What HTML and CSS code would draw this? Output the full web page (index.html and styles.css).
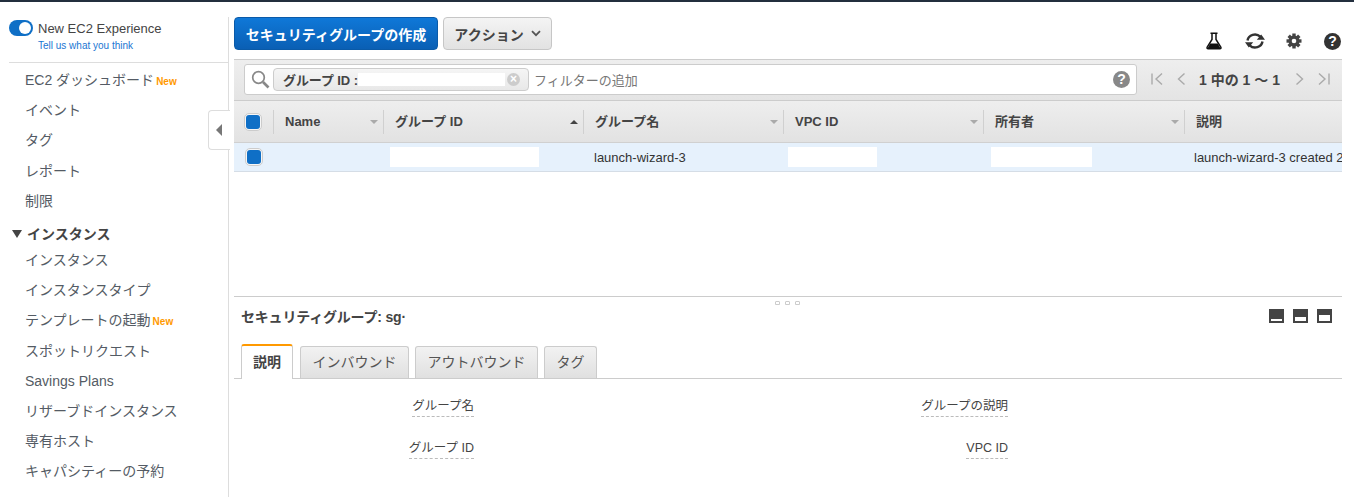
FILE: index.html
```html
<!DOCTYPE html>
<html lang="ja">
<head>
<meta charset="utf-8">
<title>セキュリティグループ</title>
<link rel="stylesheet" href="styles.css">
</head>
<body>
<div class="topline"></div>
<div class="app">
  <aside class="side">
    <div class="exp">
      <div class="exp-row"><span class="switch"><span class="knob"></span></span><span class="exp-title">New EC2 Experience</span></div>
      <a class="exp-link">Tell us what you think</a>
    </div>
    <nav class="nav">
      <div class="nav-item">EC2 ダッシュボード<span class="new">New</span></div>
      <div class="nav-item">イベント</div>
      <div class="nav-item">タグ</div>
      <div class="nav-item">レポート</div>
      <div class="nav-item">制限</div>
      <div class="nav-head"><span class="tri"></span>インスタンス</div>
      <div class="nav-item">インスタンス</div>
      <div class="nav-item">インスタンスタイプ</div>
      <div class="nav-item">テンプレートの起動<span class="new">New</span></div>
      <div class="nav-item">スポットリクエスト</div>
      <div class="nav-item">Savings Plans</div>
      <div class="nav-item">リザーブドインスタンス</div>
      <div class="nav-item">専有ホスト</div>
      <div class="nav-item">キャパシティーの予約</div>
    </nav>
    <div class="collapse"><span class="collapse-tri"></span></div>
  </aside>
  <main class="main">
    <div class="toolbar">
      <button class="btn primary">セキュリティグループの作成</button>
      <button class="btn action">アクション<svg class="chev" width="10" height="7" viewBox="0 0 10 7"><path d="M1 1.2l4 4 4-4" fill="none" stroke="#555" stroke-width="1.8"/></svg></button>
      <div class="tools">
        <svg width="18" height="18" viewBox="0 0 18 18"><path d="M5.500 1.200h7M7 2v5.500L2.200 15.200c-.5.900 0 1.600.9 1.600h11.800c.9 0 1.400-.7.9-1.600L11 7.500V2" fill="none" stroke="#111" stroke-width="1.500"/><path d="M5.200 11.500h7.600l2.500 4.600H2.700z" fill="#111"/></svg>
        <svg width="20" height="18" viewBox="0 0 20 18"><path d="M2.500 8.500a7.500 7 0 0 1 12.800-3.800M17.500 9.500a7.500 7 0 0 1-12.800 3.800" fill="none" stroke="#333" stroke-width="2.400"/><path d="M11.800 7.800h8.200l-3.800-5.200zM8.200 10.200H0l3.800 5.200z" fill="#333"/></svg>
        <svg width="16" height="16" viewBox="0 0 16 16"><g fill="#444"><circle cx="8" cy="8" r="5.500"/><rect x="6.300" y="0.500" width="3.400" height="15"/><rect x="0.500" y="6.300" width="15" height="3.400"/><rect x="6.300" y="0.500" width="3.400" height="15" transform="rotate(45 8 8)"/><rect x="6.300" y="0.500" width="3.400" height="15" transform="rotate(-45 8 8)"/></g><circle cx="8" cy="8" r="2.300" fill="#fff"/></svg>
        <span class="help dark">?</span>
      </div>
    </div>
    <div class="filter-bar">
      <div class="search">
        <svg class="lens" width="19" height="19" viewBox="0 0 19 19"><circle cx="7.500" cy="7.500" r="5.800" fill="none" stroke="#888" stroke-width="1.700"/><path d="M12 12l5.500 5.500" stroke="#888" stroke-width="2.600"/></svg>
        <div class="token"><b class="token-label">グループ ID :</b><span class="token-mask"></span><span class="token-x">×</span></div>
        <span class="placeholder">フィルターの追加</span>
        <span class="help grey">?</span>
      </div>
      <div class="pager">
        <svg width="14" height="14" viewBox="0 0 14 14"><path d="M2 1.500v11M12 1.500L6 7l6 5.500" fill="none" stroke="#aaa" stroke-width="1.400"/></svg>
        <svg width="10" height="14" viewBox="0 0 10 14"><path d="M8.500 1.500L2.500 7l6 5.500" fill="none" stroke="#aaa" stroke-width="1.400"/></svg>
        <span class="pager-text">1 中の 1 〜 1</span>
        <svg width="10" height="14" viewBox="0 0 10 14"><path d="M1.500 1.500L7.500 7l-6 5.500" fill="none" stroke="#aaa" stroke-width="1.400"/></svg>
        <svg width="14" height="14" viewBox="0 0 14 14"><path d="M12 1.500v11M2 1.500L8 7l-6 5.500" fill="none" stroke="#aaa" stroke-width="1.400"/></svg>
      </div>
    </div>
    <div class="grid head-row">
      <div class="cell check-cell"><span class="check"></span></div>
      <div class="cell th">Name<span class="sort"></span></div>
      <div class="cell th">グループ ID<span class="sort up"></span></div>
      <div class="cell th">グループ名<span class="sort"></span></div>
      <div class="cell th">VPC ID<span class="sort"></span></div>
      <div class="cell th">所有者<span class="sort"></span></div>
      <div class="cell th">説明</div>
    </div>
    <div class="grid body-row">
      <div class="cell check-cell"><span class="check small"></span></div>
      <div class="cell"></div>
      <div class="cell"><span class="mask m1"></span></div>
      <div class="cell td">launch-wizard-3</div>
      <div class="cell"><span class="mask m2"></span></div>
      <div class="cell"><span class="mask m3"></span></div>
      <div class="cell td clip">launch-wizard-3 created 2</div>
    </div>
    <div class="spacer"></div>
    <div class="split"><span class="grip"></span><span class="grip"></span><span class="grip"></span></div>
    <div class="detail-head">
      <h2 class="detail-title">セキュリティグループ: sg·</h2>
      <div class="panes">
        <span class="pane"><span class="pane-in p1"></span></span>
        <span class="pane"><span class="pane-in p2"></span></span>
        <span class="pane"><span class="pane-in p3"></span></span>
      </div>
    </div>
    <div class="tabs">
      <div class="tab active">説明</div>
      <div class="tab">インバウンド</div>
      <div class="tab">アウトバウンド</div>
      <div class="tab">タグ</div>
    </div>
    <div class="props">
      <div class="prop-l"><span class="prop">グループ名</span></div>
      <div class="prop-r"><span class="prop">グループの説明</span></div>
      <div class="prop-l"><span class="prop">グループ ID</span></div>
      <div class="prop-r"><span class="prop">VPC ID</span></div>
    </div>
  </main>
</div>
</body>
</html>
```
FILE: styles.css
```css
* { box-sizing: border-box; }
html, body { margin: 0; padding: 0; height: 497px; overflow: hidden; background: #fff; }
body { font-family: "Liberation Sans", "Noto Sans CJK JP", sans-serif; color: #444; font-size: 13px; }
.topline { height: 2px; background: #232f3e; }
.app { display: flex; height: 495px; }

.side { position: relative; width: 229px; flex: none; border-right: 1px solid #ddd; margin-top: 15px; height: 480px; }
.exp { margin-left: 9px; height: 43px; border-bottom: 1px solid #ddd; }
.exp-row { display: flex; align-items: center; height: 16px; margin-top: 3px; }
.switch { width: 24px; height: 16px; border-radius: 8px; background: #0f6fc6; position: relative; flex: none; }
.knob { position: absolute; right: 2px; top: 2px; width: 12px; height: 12px; border-radius: 50%; background: #fff; }
.exp-title { margin-left: 5px; font-size: 13px; color: #444; }
.exp-link { display: block; margin: 4px 0 0 29px; font-size: 10px; line-height: 12px; color: #1a76d2; }
.nav { padding-top: 2px; }
.nav-item { height: 30.200px; line-height: 30px; padding-left: 25px; font-size: 14px; color: #545b64; white-space: nowrap; }
.nav-head { height: 22px; line-height: 22px; margin-top: 7px; padding-left: 12px; font-size: 14px; font-weight: 700; color: #444; display: flex; align-items: center; }
.tri { width: 0; height: 0; border-left: 5px solid transparent; border-right: 5px solid transparent; border-top: 8px solid #444; margin-right: 5px; }
.new { margin-left: 2px; font-size: 10px; font-weight: 700; color: #ff9900; }
.collapse { position: absolute; left: 208px; top: 93px; width: 22px; height: 40px; background: #fff; border: 1px solid #ddd; border-right: 0; border-radius: 4px 0 0 4px; display: flex; align-items: center; justify-content: center; }
.collapse-tri { width: 0; height: 0; border-top: 6px solid transparent; border-bottom: 6px solid transparent; border-right: 6px solid #777; margin-right: 2px; }

.main { width: 1108px; margin-left: 5px; flex: none; display: flex; flex-direction: column; }
.toolbar { display: flex; align-items: flex-start; padding-top: 15px; height: 57px; position: relative; }
.btn { height: 33px; border-radius: 4px; font: 700 14px "Liberation Sans", "Noto Sans CJK JP", sans-serif; padding: 0; }
.primary { width: 204px; color: #fff; background: linear-gradient(#0f78d8, #0a5fb4); border: 1px solid #0a5aa8; }
.action { width: 109px; margin-left: 5px; color: #444; background: linear-gradient(#f4f4f4, #e2e2e2); border: 1px solid #c6c6c6; display: flex; align-items: center; justify-content: center; gap: 7px; }
.tools { position: absolute; left: 971px; top: 29px; display: flex; align-items: center; justify-content: space-between; height: 20px; width: 136px; }
.help { display: inline-flex; align-items: center; justify-content: center; width: 17px; height: 17px; border-radius: 50%; color: #fff; font-size: 14px; font-weight: 700; line-height: 17px; flex: none; }
.help.dark { background: #333; }
.help.grey { background: #888; }

.filter-bar { height: 42px; background: linear-gradient(#eee, #e4e4e4); border-top: 1px solid #ccc; border-bottom: 1px solid #ccc; display: flex; align-items: center; padding: 0 0 2px 10px; flex: none; }
.search { width: 893px; height: 31px; background: #fff; border: 1px solid #ccc; border-radius: 3px; display: flex; align-items: center; padding-left: 6px; position: relative; }
.lens { flex: none; }
.token { margin-left: 3px; width: 256px; height: 23px; border: 1px solid #ccc; border-radius: 4px; background: linear-gradient(#f5f5f5, #e8e8e8); display: flex; align-items: center; padding-left: 9px; font-size: 13px; color: #444; position: relative; }
.token-label { letter-spacing: -0.1px; }
.token-mask { position: absolute; left: 84px; top: 4px; width: 147px; height: 13px; background: #fff; }
.token-x { position: absolute; right: 8px; top: 4px; width: 13px; height: 13px; border-radius: 50%; background: #ccc; color: #fff; font-size: 12px; font-weight: 700; line-height: 13px; text-align: center; }
.placeholder { margin-left: 5px; color: #777; font-size: 13px; }
.search .help { position: absolute; right: 6px; top: 6px; }
.pager { display: flex; align-items: center; margin-left: 13px; font-size: 14px; font-weight: 700; color: #444; gap: 12px; }
.pager-text { margin: 0 2px 0 1px; width: 82px; font-size: 14px; white-space: nowrap; }

.grid { display: grid; grid-template-columns: 39px 110px 200px 200px 200px 201px 158px; flex: none; }
.head-row { height: 42px; background: linear-gradient(#eee, #e2e2e2); border-bottom: 1px solid #d0d0d0; align-items: center; }
.body-row { height: 29px; background: #e6f1fc; border-bottom: 1px solid #d5dde6; align-items: center; }
.cell { position: relative; white-space: nowrap; overflow: hidden; }
.check-cell { padding-left: 10px; display: flex; align-items: center; }
.check { width: 18px; height: 18px; border-radius: 5px; background: #f6f6f6; border: 1px solid #ccc; display: flex; align-items: center; justify-content: center; }
.check::before { content: ""; width: 14px; height: 14px; border-radius: 3px; background: #0f6fc6; }
.check.small { margin-left: 1px; }
.th { height: 24px; line-height: 24px; padding-left: 11px; font-weight: 700; font-size: 13px; color: #444; border-left: 1px solid #d0d0d0; }
.sort { position: absolute; right: 5px; top: 10px; width: 0; height: 0; border-left: 4px solid transparent; border-right: 4px solid transparent; border-top: 4px solid #aaa; }
.sort.up { border-top: 0; border-bottom: 4px solid #444; }
.td { font-size: 13px; color: #333; padding-left: 11px; }
.clip { overflow: hidden; padding-left: 10px; }
.mask { display: block; height: 20px; background: #fff; }
.m1 { width: 149px; margin-left: 7px; }
.m2 { width: 89px; margin-left: 5px; }
.m3 { width: 101px; margin-left: 8px; }

.spacer { height: 124px; flex: none; }
.split { height: 14px; border-top: 1px solid #ccc; display: flex; justify-content: center; gap: 5px; padding: 4px 2px 0 0; flex: none; }
.grip { width: 5px; height: 4px; border: 1px solid #ccc; border-radius: 1px 1px 0 0; }
.detail-head { display: flex; justify-content: space-between; align-items: flex-start; height: 36px; padding: 0 10px 0 7px; flex: none; margin-top: -1px; }
.detail-title { margin: 0; font-size: 14px; line-height: 16px; font-weight: 700; color: #444; letter-spacing: -0.2px; }
.panes { display: flex; gap: 9px; }
.pane { width: 15px; height: 14px; background: #444; position: relative; display: block; }
.pane-in { position: absolute; left: 2px; right: 2px; bottom: 2px; background: #fff; }
.p1 { height: 2px; }
.p2 { height: 4px; }
.p3 { height: 6px; }

.tabs { display: flex; align-items: flex-end; gap: 6px; height: 34px; padding-left: 7px; border-bottom: 1px solid #ccc; flex: none; }
.tab { height: 32px; line-height: 30px; padding: 0 11.500px; font-size: 14px; color: #555; background: linear-gradient(#f2f2f2, #e0e0e0); border: 1px solid #ccc; border-bottom: 0; border-radius: 3px 3px 0 0; }
.tab.active { height: 35px; line-height: 32px; padding: 0 11px; background: #fff; border-top: 2px solid #ff9900; font-weight: 700; color: #444; margin: 0 1px -1px 0; position: relative; }

.props { display: grid; grid-template-columns: 240px 534px; grid-auto-rows: 42px; padding-top: 19px; }
.prop-l, .prop-r { text-align: right; font-size: 12.500px; color: #444; }
.prop { display: inline-block; line-height: 17px; padding-bottom: 1px; border-bottom: 1px dashed #bbb; }
```
